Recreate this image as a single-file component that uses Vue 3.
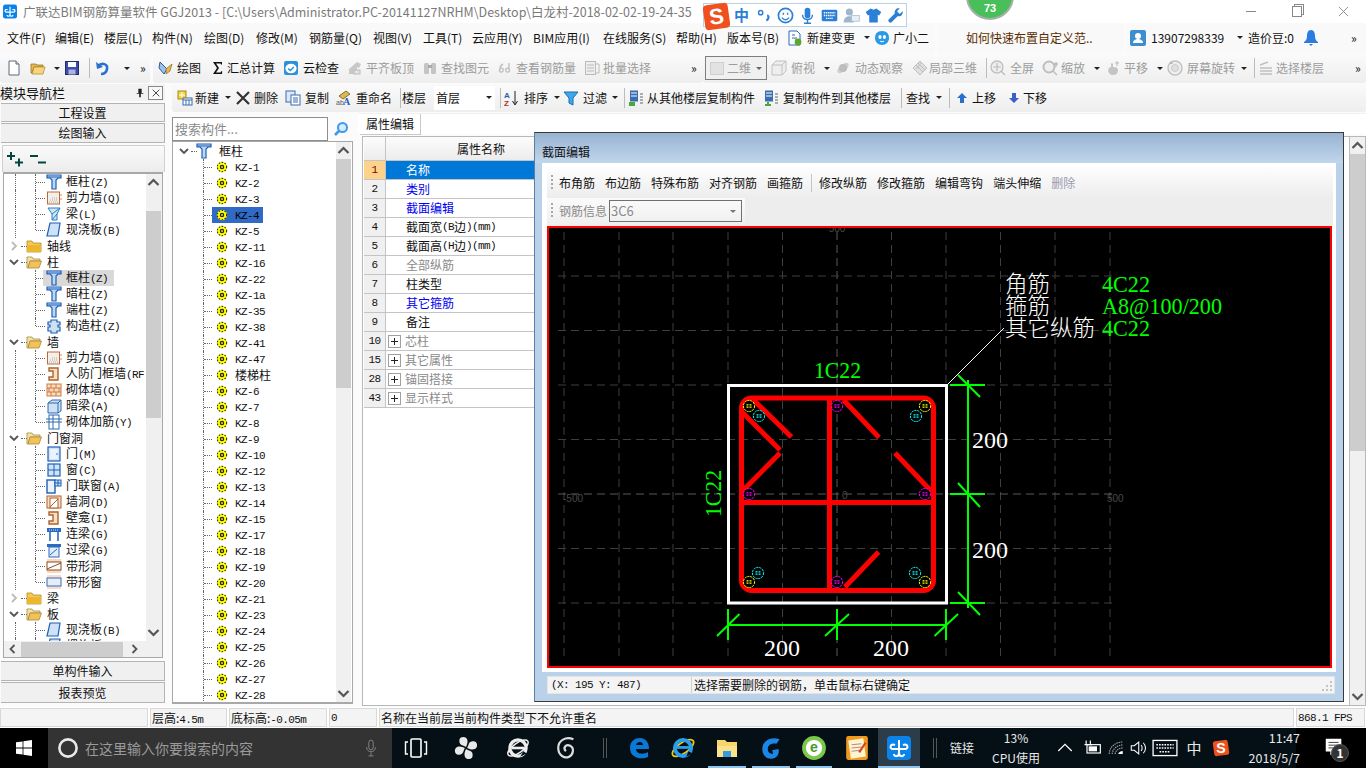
<template>
  <div class="app">
    <!-- title bar -->
    <div class="title">
      <svg class="title-ic" viewBox="0 0 24 24" v-html="taskIcons.gld"></svg>
      <span class="title-text">广联达BIM钢筋算量软件 GGJ2013 - [C:\Users\Administrator.PC-20141127NRHM\Desktop\白龙村-2018-02-02-19-24-35</span>
      <div class="winbtns">
        <span class="wb"><i class="wb-min"></i></span>
        <span class="wb"><i class="wb-max"></i></span>
        <span class="wb wb-x">
          <svg viewBox="0 0 12 12"><path d="M1 1l10 10M11 1L1 11" stroke="#888" fill="none" /></svg>
        </span>
      </div>
    </div>

    <!-- menu + main toolbar -->
    <div v-for="row in topRows" :key="row.id" class="bar" :class="row.id">
      <div
        v-for="(seg, si) in row.segs"
        :key="si"
        class="seg"
        :style="{ width: seg.width + 'px', marginLeft: seg.gap + 'px', paddingLeft: seg.pad + 'px' }"
      >
        <span
          v-for="(it, n) in seg.items"
          :key="n"
          class="it"
          :class="['k-' + it.kind, { dis: it.dis }]"
          :style="{ width: it.w + 'px' }"
        >
          <i v-if="it.kind === 'caret'" class="caret"></i>
          <i v-else-if="it.kind === 'sep'" class="sep"></i>
          <span v-else-if="it.kind === 'twod'" class="combo2d"><i class="sq"></i><span>二维</span><i class="caret"></i></span>
          <template v-else>
            <span v-if="it.i" class="icbox" :style="{ width: it.iw + 'px' }">
              <svg viewBox="0 0 16 16" v-html="icons[it.i]"></svg>
            </span>
            <span class="lbl">{{ it.t }}</span>
          </template>
        </span>
      </div>
    </div>

    <div class="main">
      <!-- module nav -->
      <div class="nav">
        <div class="nav-head">
          <span>模块导航栏</span>
          <svg class="pin" viewBox="0 0 12 12"><path d="M4 1h4v5h2v1H7v4H5V7H2V6h2z" fill="#222" /></svg>
          <span class="nav-x">
            <svg viewBox="0 0 12 12"><path d="M2 2l8 8M10 2l-8 8" stroke="#222" fill="none" /></svg>
          </span>
        </div>
        <div class="nav-btn first">工程设置</div>
        <div class="nav-btn second">绘图输入</div>
        <div class="nav-plus">
          <svg viewBox="0 0 16 15"><path d="M0 4h8M4 0v8M8 10.5h8M12 6.5v8" stroke="#00473f" stroke-width="2" fill="none" /></svg>
          <svg viewBox="0 0 16 15"><path d="M0 4h8M8 10.5h8" stroke="#00473f" stroke-width="2" fill="none" /></svg>
        </div>
        <div class="nav-tree">
          <div class="nav-tree-top">
            <div class="tree">
              <div v-for="(r, n) in navRows" :key="n" class="row" :class="r.root ? 'root' : 'kid'">
                <i v-if="r.chain" class="dots v chain"></i>
                <i v-if="!r.root" class="dots v link" :class="{ last: r.last }"></i>
                <i class="dots h"></i>
                <template v-if="r.root">
                  <svg class="chev" :class="{ closed: !r.open }" viewBox="0 0 12 12">
                    <path :d="r.open ? 'M2 4l4 4 4-4' : 'M4 2l4 4-4 4'" fill="none" stroke-width="1.8" />
                  </svg>
                  <svg class="tree-ic folder" viewBox="0 0 16 16" v-html="icons[r.open ? 'folderOpen' : 'folder']"></svg>
                  <span class="node">{{ r.t }}</span>
                </template>
                <span v-else class="cell" :class="{ grey: r.sel }">
                  <svg class="tree-ic" viewBox="0 0 16 16" v-html="icons[r.i]"></svg>
                  <span class="node">
                    <span v-for="(p, k) in runs(r.t)" :key="k" :class="{ lat: p.lat }">{{ p.t }}</span>
                  </span>
                </span>
              </div>
            </div>
            <div class="sb">
              <svg class="sb-arrow" viewBox="0 0 12 12"><path d="M2 8l4-4 4 4" /></svg>
              <div class="sb-track nav-track"><div class="sb-thumb"></div></div>
              <svg class="sb-arrow" viewBox="0 0 12 12"><path d="M2 4l4 4 4-4" /></svg>
            </div>
          </div>
          <div class="hsb">
            <svg class="hsb-arrow" viewBox="0 0 12 12"><path d="M8 2L4 6l4 4" /></svg>
            <div class="hsb-thumb"></div>
            <svg class="hsb-arrow right" viewBox="0 0 12 12"><path d="M4 2l4 4-4 4" /></svg>
          </div>
        </div>
        <div class="nav-btn low">单构件输入</div>
        <div class="nav-btn low2">报表预览</div>
      </div>

      <div class="work">
        <!-- component toolbar -->
        <div class="bar row3">
          <div
            v-for="(seg, si) in row3.segs"
            :key="si"
            class="seg"
            :style="{ width: seg.width + 'px', marginLeft: seg.gap + 'px', paddingLeft: seg.pad + 'px' }"
          >
            <span
              v-for="(it, n) in seg.items"
              :key="n"
              class="it"
              :class="['k-' + it.kind, { dis: it.dis }]"
              :style="{ width: it.w + 'px' }"
            >
              <i v-if="it.kind === 'caret'" class="caret"></i>
              <i v-else-if="it.kind === 'sep'" class="sep"></i>
              <span v-else-if="it.kind === 'combo'" class="floor">首层<i class="caret"></i></span>
              <template v-else>
                <span v-if="it.i" class="icbox" :style="{ width: it.iw + 'px' }">
                  <svg viewBox="0 0 16 16" v-html="icons[it.i]"></svg>
                </span>
                <span class="lbl">{{ it.t }}</span>
              </template>
            </span>
          </div>
        </div>

        <div class="panes">
          <!-- component list -->
          <div class="list-pane">
            <div class="search">
              <div class="search-box">搜索构件...</div>
              <svg class="search-ic" viewBox="0 0 16 16">
                <circle cx="9.5" cy="6.5" r="4.5" fill="#d6ecff" stroke="#3c9ae8" stroke-width="2" />
                <path d="M6 10l-4 4" stroke="#3c9ae8" stroke-width="2.6" />
              </svg>
            </div>
            <div class="list-box">
              <div class="tree">
                <div class="row list-root">
                  <svg class="chev" viewBox="0 0 12 12"><path d="M2 4l4 4 4-4" fill="none" stroke-width="1.8" /></svg>
                  <i class="dots h"></i>
                  <svg class="tree-ic" viewBox="0 0 16 16" v-html="icons.column"></svg>
                  <span class="node">框柱</span>
                </div>
                <div v-for="name in kzList" :key="name" class="row list-kid">
                  <i class="dots v link"></i>
                  <i class="dots h"></i>
                  <span class="cell" :class="{ blue: name === 'KZ-4' }">
                    <svg class="gear" viewBox="0 0 16 16" v-html="icons.gear"></svg>
                    <span class="node">
                      <span v-for="(p, k) in runs(name)" :key="k" :class="{ lat: p.lat }">{{ p.t }}</span>
                    </span>
                  </span>
                </div>
              </div>
              <div class="sb">
                <svg class="sb-arrow" viewBox="0 0 12 12"><path d="M2 8l4-4 4 4" /></svg>
                <div class="sb-track list-track"><div class="sb-thumb"></div></div>
                <svg class="sb-arrow" viewBox="0 0 12 12"><path d="M2 4l4 4 4-4" /></svg>
              </div>
            </div>
          </div>

          <!-- property editor -->
          <div class="prop-pane">
            <div class="tabs"><span class="tab">属性编辑</span></div>
            <div class="prop-box">
              <div class="prop-table">
                <div class="prow phead">
                  <span class="pidx"></span>
                  <span class="pname">属性名称</span>
                </div>
                <div v-for="(p, n) in props" :key="p.n" class="prow" :class="{ cur: n === 0 }">
                  <span class="pidx">{{ p.n }}</span>
                  <span class="pname left" :class="p.c">
                    <i v-if="p.plus" class="plus"></i>
                    <span v-for="(q, k) in runs(p.t)" :key="k" :class="{ lat: q.lat }">{{ q.t }}</span>
                  </span>
                </div>
              </div>
              <div class="sb prop-sb">
                <svg class="sb-arrow" viewBox="0 0 12 12"><path d="M2 8l4-4 4 4" /></svg>
                <div class="sb-track prop-track"><div class="sb-thumb"></div></div>
                <svg class="sb-arrow" viewBox="0 0 12 12"><path d="M2 4l4 4 4-4" /></svg>
              </div>
            </div>
          </div>
        </div>
      </div>
    </div>

    <!-- status bar -->
    <div class="status">
      <span class="st s0"></span>
      <span class="st s1"><span>层高:</span><span class="lat">4.5m</span></span>
      <span class="st s2"><span>底标高:</span><span class="lat">-0.05m</span></span>
      <span class="st s3 lat">0</span>
      <span class="st s4">名称在当前层当前构件类型下不允许重名</span>
      <span class="st s5 lat">868.1 FPS</span>
    </div>

    <!-- taskbar -->
    <div class="taskbar">
      <div class="start">
        <svg viewBox="0 0 16 16">
          <path d="M0 2.3L6.6 1.4V7.6H0zM7.4 1.3L16 0V7.6H7.4zM0 8.4H6.6V14.6L0 13.7zM7.4 8.4H16V16L7.4 14.7z" fill="#fff" />
        </svg>
      </div>
      <div class="tsearch">
        <svg class="cortana" viewBox="0 0 22 22"><circle cx="11" cy="11" r="8.6" fill="none" stroke="#e8e8e8" stroke-width="2.6" /></svg>
        <span>在这里输入你要搜索的内容</span>
        <svg class="tmic" viewBox="0 0 16 20">
          <rect x="5.5" y="1" width="5" height="11" rx="2.5" fill="none" stroke="#8a8a8a" />
          <path d="M3 9c0 7 10 7 10 0M8 15v4M5 19h6" fill="none" stroke="#8a8a8a" />
        </svg>
      </div>
      <span
        v-for="c in taskCells"
        :key="c.id"
        class="tc"
        :class="[c.cls, { run: c.run }]"
        :style="{ width: c.w + 'px' }"
      >
        <svg v-if="c.i" :style="{ width: c.s + 'px', height: c.s + 'px' }" viewBox="0 0 24 24" v-html="taskIcons[c.i]"></svg>
        <span v-else-if="c.t" class="tc-text">{{ c.t }}</span>
      </span>
      <span class="tc cpu">13%<br />CPU使用</span>
      <span v-for="c in trayCells" :key="c.id" class="tc" :style="{ width: c.w + 'px' }">
        <svg v-if="c.i" :style="{ width: c.s + 'px', height: c.s + 'px' }" viewBox="0 0 24 24" v-html="taskIcons[c.i]"></svg>
        <span v-else class="tc-text big">{{ c.t }}</span>
      </span>
      <span class="clock">11:47<br />2018/5/7</span>
      <span class="notif">
        <svg viewBox="0 0 24 24">
          <path d="M3 3h17v14h-8l-4 4v-4H3z" fill="#fff" />
          <path d="M6 7h11M6 10h11M6 13h8" stroke="#333" />
        </svg>
        <b>1</b>
      </span>
    </div>

    <!-- section editor window -->
    <div class="dlg">
      <div class="dlg-title">截面编辑</div>
      <div class="dlg-body">
        <div class="dlg-tb">
          <i class="grip"></i>
          <span v-for="b in dlgBtns" :key="b" class="dbtn" :class="{ off: b === '删除', sepafter: b === '画箍筋' }">{{ b }}</span>
        </div>
        <div class="dlg-tb2">
          <div class="dlg-tb2-in">
            <i class="grip"></i>
            <span class="dinfo">钢筋信息</span>
            <span class="dcombo">3C6<i class="caret"></i></span>
          </div>
        </div>
        <div class="canvas">
          <svg width="781" height="438" viewBox="549 228 781 438">
            <g stroke-dasharray="8 5" fill="none">
              <path v-for="x in gridX" :key="'x' + x" :d="`M${x} 232V660`" :stroke="x === 837 ? '#5a5a5a' : '#3e3e3e'" />
              <path v-for="y in gridY" :key="'y' + y" :d="`M558 ${y}H1116`" :stroke="y === 494 ? '#5a5a5a' : '#3e3e3e'" />
            </g>
            <g fill="#4a4a4a" font-family="Liberation Sans, sans-serif" font-size="10">
              <text x="837" y="232" text-anchor="middle">500</text>
              <text x="563" y="502">-500</text>
              <text x="1107" y="502">500</text>
              <text x="842" y="499">0</text>
            </g>

            <!-- section outline -->
            <rect x="728.5" y="385.5" width="218" height="217.5" fill="none" stroke="#fff" stroke-width="3" />

            <!-- stirrups -->
            <g fill="none" stroke="#f00" stroke-width="5">
              <rect x="741.5" y="398" width="192" height="192.5" rx="10" />
              <path d="M829.5 398V590M742 502.5H933" />
              <path d="M753.5 400L791.5 437M742 412L780 450M780 453L742 491.5" />
              <path d="M843.5 400L879 437.5M895 453L931.5 491.5M878.5 552L845 587" />
            </g>

            <!-- bars -->
            <g v-for="(b, n) in bars" :key="n" :transform="`translate(${b.x} ${b.y})`">
              <circle r="5.6" fill="#000" :stroke="b.c" stroke-dasharray="2.2 0.8" />
              <path d="M-2.5 -1.2h2M.5 -1.2h2M-2.5 1.2h2M.5 1.2h2" :stroke="b.d" stroke-width="1.2" />
            </g>

            <!-- dimensions -->
            <g fill="none" stroke="#0f0" stroke-width="2">
              <path d="M728 625H946M728 609V640M837 609V640M946 609V640" />
              <path d="M717 636L739.5 614M825 636L849 614M934.5 636L958 614" />
              <path d="M968 380V608M950 385H985M950 494H985M950 603H985" />
              <path d="M958 375L980 397M958 483L980 507M958 592L980 615" />
            </g>
            <path d="M947 385L1004 328" stroke="#fff" />

            <g class="cad-num" fill="#fff">
              <text x="764" y="656" textLength="36" lengthAdjust="spacingAndGlyphs">200</text>
              <text x="873" y="656" textLength="36" lengthAdjust="spacingAndGlyphs">200</text>
              <text x="972" y="448" textLength="36" lengthAdjust="spacingAndGlyphs">200</text>
              <text x="972" y="558" textLength="36" lengthAdjust="spacingAndGlyphs">200</text>
            </g>
            <g class="cad-num" fill="#0f0">
              <text x="814" y="378" textLength="47" lengthAdjust="spacingAndGlyphs">1C22</text>
              <text x="0" y="0" textLength="47" lengthAdjust="spacingAndGlyphs" transform="translate(721 517) rotate(-90)">1C22</text>
              <text x="1102" y="292" textLength="48" lengthAdjust="spacingAndGlyphs">4C22</text>
              <text x="1102" y="314" textLength="120" lengthAdjust="spacingAndGlyphs">A8@100/200</text>
              <text x="1102" y="336" textLength="48" lengthAdjust="spacingAndGlyphs">4C22</text>
            </g>
            <g class="cad-cn" fill="#fff">
              <text x="1005" y="292">角筋</text>
              <text x="1005" y="314">箍筋</text>
              <text x="1005" y="336">其它纵筋</text>
            </g>
          </svg>
        </div>
      </div>
      <div class="dlg-status">
        <span class="ds1 lat">(X: 195 Y: 487)</span>
        <span class="ds2">选择需要删除的钢筋，单击鼠标右键确定</span>
        <svg class="sgrip" viewBox="0 0 12 12">
          <path d="M9 1h2v2H9zM5 5h2v2H5zM9 5h2v2H9zM1 9h2v2H1zM5 9h2v2H5zM9 9h2v2H9z" fill="#c4c4c4" />
        </svg>
      </div>
    </div>

    <!-- floating bits over the title bar -->
    <div class="ime">
      <span class="ime-s">S</span>
      <span class="ime-cn">中</span>
      <svg v-for="n in imeIcons" :key="n" class="ime-ic" viewBox="0 0 24 24" v-html="imeSvg[n]"></svg>
    </div>
    <div class="ball"><span>73</span></div>
  </div>
</template>

<script setup>
// rows are described by the x where each item starts, widths come from the next item
const KINDS = ['caret', 'sep', 'combo', 'twod']

function seg(from, to, list) {
  const items = list.map((a, n) => {
    const next = n + 1 < list.length ? list[n + 1][0] : to
    const [x, tx, i, t, opt] = a
    const kind = KINDS.includes(i) ? i : ''
    return {
      w: next - x,
      iw: tx - x,
      i: kind ? '' : i,
      t,
      kind,
      dis: opt === 'd',
    }
  })
  return { from, to, x0: list[0][0], items }
}

function row(id, segs) {
  let prev = 0
  const out = segs.map((s) => {
    const r = { ...s, width: s.to - s.from, gap: s.from - prev, pad: s.x0 - s.from }
    prev = s.to
    return r
  })
  return { id, segs: out }
}

const menuRow = row('menu', [
  seg(0, 935, [
    [7, 7, '', '文件(F)'], [55, 55, '', '编辑(E)'], [104, 104, '', '楼层(L)'], [152, 152, '', '构件(N)'],
    [204, 204, '', '绘图(D)'], [256, 256, '', '修改(M)'], [309, 309, '', '钢筋量(Q)'], [373, 373, '', '视图(V)'],
    [423, 423, '', '工具(T)'], [472, 472, '', '云应用(Y)'], [533, 533, '', 'BIM应用(I)'], [603, 603, '', '在线服务(S)'],
    [676, 676, '', '帮助(H)'], [727, 727, '', '版本号(B)'], [787, 807, 'change', '新建变更'], [860, 0, 'caret'],
    [874, 893, 'xiao', '广小二'],
  ]),
  seg(937, 1124, [[966, 966, '', '如何快速布置自定义范..']]),
  seg(1126, 1366, [
    [1130, 1151, 'avatar', '13907298339'], [1232, 0, 'caret'], [1248, 1248, '', '造价豆:0'],
    [1303, 1303, 'bell', ''], [1351, 1351, '', '»'],
  ]),
])

const toolRow = row('tools', [
  seg(0, 150, [
    [6, 6, 'doc', ''], [30, 30, 'open', ''], [49, 0, 'caret'], [64, 64, 'save', ''], [84, 0, 'sep'],
    [94, 94, 'undo', ''], [113, 0, 'caret'], [140, 140, '', '»'],
  ]),
  seg(153, 703, [
    [157, 177, 'draw', '绘图'], [211, 227, 'sigma', '汇总计算'], [283, 303, 'cloud', '云检查'],
    [347, 366, 'plate', '平齐板顶', 'd'], [422, 441, 'binoc', '查找图元', 'd'], [497, 516, 'rebar', '查看钢筋量', 'd'],
    [584, 603, 'batch', '批量选择', 'd'], [691, 691, '', '»'],
  ]),
  seg(703, 1366, [
    [705, 0, 'twod'], [771, 791, 'box3d', '俯视', 'd'], [819, 0, 'caret'], [835, 855, 'orbit', '动态观察', 'd'],
    [912, 929, 'local3d', '局部三维', 'd'], [983, 0, 'sep'], [990, 1010, 'zoomall', '全屏', 'd'],
    [1042, 1061, 'zoom', '缩放', 'd'], [1089, 0, 'caret'], [1105, 1124, 'pan', '平移', 'd'], [1152, 0, 'caret'],
    [1167, 1187, 'rotate', '屏幕旋转', 'd'], [1237, 0, 'caret'], [1250, 0, 'sep'],
    [1258, 1276, 'floors', '选择楼层', 'd'], [1355, 1355, '', '»'],
  ]),
])

const topRows = [menuRow, toolRow]

const row3 = row('row3', [
  seg(0, 1194, [
    [5, 23, 'add', '新建'], [48, 0, 'caret'], [63, 82, 'del', '删除'], [113, 133, 'copy', '复制'],
    [164, 184, 'rename', '重命名'], [226, 0, 'sep'], [230, 230, '', '楼层'], [260, 0, 'combo'], [324, 0, 'sep'],
    [332, 352, 'sort', '排序'], [379, 0, 'caret'], [391, 411, 'filter', '过滤'], [437, 0, 'caret'], [448, 0, 'sep'],
    [456, 475, 'from', '从其他楼层复制构件'], [591, 611, 'to', '复制构件到其他楼层'], [725, 0, 'sep'],
    [734, 734, '', '查找'], [760, 0, 'caret'], [773, 0, 'sep'], [782, 800, 'up', '上移'], [834, 851, 'down', '下移'],
  ]),
])

const nav = (i, t, chain = true, last = false, sel = false) => ({ i, t, chain, last, sel })
const root = (t, open) => ({ root: true, t, open })

const navRows = [
  nav('column', '框柱(Z)'), nav('wall', '剪力墙(Q)'), nav('beam', '梁(L)'), nav('slab', '现浇板(B)', true, true),
  root('轴线', false), root('柱', true),
  nav('column', '框柱(Z)', false, false, true), nav('column', '暗柱(Z)', false), nav('column', '端柱(Z)', false),
  nav('puzzle', '构造柱(Z)', false, true),
  root('墙', true),
  nav('wall', '剪力墙(Q)'), nav('rf', '人防门框墙(RF'), nav('brick', '砌体墙(Q)'), nav('darkbeam', '暗梁(A)'),
  nav('rebarwall', '砌体加筋(Y)', true, true),
  root('门窗洞', true),
  nav('door', '门(M)'), nav('window', '窗(C)'), nav('doorwin', '门联窗(A)'), nav('hole', '墙洞(D)'), nav('rf', '壁龛(I)'),
  nav('linkbeam', '连梁(G)'), nav('lintel', '过梁(G)'), nav('striphole', '带形洞'), nav('stripwin', '带形窗', true, true),
  root('梁', false), root('板', true),
  nav('slab', '现浇板(B)'), nav('slab', '螺旋板(B)'),
]

const kzList = [
  'KZ-1', 'KZ-2', 'KZ-3', 'KZ-4', 'KZ-5', 'KZ-11', 'KZ-16', 'KZ-22', 'KZ-1a', 'KZ-35', 'KZ-38', 'KZ-41', 'KZ-47', '楼梯柱',
  'KZ-6', 'KZ-7', 'KZ-8', 'KZ-9', 'KZ-10', 'KZ-12', 'KZ-13', 'KZ-14', 'KZ-15', 'KZ-17', 'KZ-18', 'KZ-19', 'KZ-20', 'KZ-21',
  'KZ-23', 'KZ-24', 'KZ-25', 'KZ-26', 'KZ-27', 'KZ-28',
]

const props = [
  { n: 1, t: '名称', c: 'sel' }, { n: 2, t: '类别', c: 'link' }, { n: 3, t: '截面编辑', c: 'link' },
  { n: 4, t: '截面宽(B边)(mm)' }, { n: 5, t: '截面高(H边)(mm)' }, { n: 6, t: '全部纵筋', c: 'mute' },
  { n: 7, t: '柱类型' }, { n: 8, t: '其它箍筋', c: 'link' }, { n: 9, t: '备注' },
  { n: 10, t: '芯柱', c: 'mute', plus: true }, { n: 15, t: '其它属性', c: 'mute', plus: true },
  { n: 28, t: '锚固搭接', c: 'mute', plus: true }, { n: 43, t: '显示样式', c: 'mute', plus: true },
]

// latin runs go in the narrow mono face, like the 6px half-width latin of the original
function runs(text) {
  return text.split(/([\x00-\x7f]+)/).filter(Boolean).map((t) => ({ t, lat: /^[\x00-\x7f]/.test(t) }))
}

const dlgBtns = ['布角筋', '布边筋', '特殊布筋', '对齐钢筋', '画箍筋', '修改纵筋', '修改箍筋', '编辑弯钩', '端头伸缩', '删除']

const gridX = [564, 619, 673, 728, 782.5, 837, 891.5, 946, 1000.5, 1055, 1110]
const gridY = [276, 330.5, 385, 439.5, 494, 548.5, 603]

const bars = [
  { x: 749, y: 406, c: '#ff0', d: '#ff0' }, { x: 925, y: 406, c: '#ff0', d: '#ff0' },
  { x: 749, y: 582, c: '#ff0', d: '#ff0' }, { x: 925, y: 582, c: '#ff0', d: '#ff0' },
  { x: 837, y: 406, c: '#f0f', d: '#f0f' }, { x: 749, y: 494, c: '#f0f', d: '#f0f' },
  { x: 925, y: 494, c: '#f0f', d: '#f0f' }, { x: 837, y: 582, c: '#f0f', d: '#f0f' },
  { x: 759, y: 416, c: '#0ff', d: '#0ff' }, { x: 916, y: 416, c: '#0ff', d: '#0ff' },
  { x: 758, y: 573, c: '#0ff', d: '#0ff' }, { x: 915, y: 573, c: '#0ff', d: '#0ff' },
]

const imeIcons = ['comma', 'smile', 'mic', 'kb', 'user', 'shirt', 'wrench']
const imeSvg = {
  comma: '<circle cx="8" cy="8" r="3" fill="none" stroke="#2a7fd6" stroke-width="2"/><path d="M17 12c3 0 3 5-1 7" fill="none" stroke="#2a7fd6" stroke-width="3"/>',
  smile: '<circle cx="12" cy="12" r="10" fill="none" stroke="#2a7fd6" stroke-width="2.4"/><path d="M9 8v3M15 8v3M7 15c3 4 7 4 10 0" fill="none" stroke="#2a7fd6" stroke-width="2"/>',
  mic: '<rect x="8" y="1" width="8" height="15" rx="4" fill="#2a7fd6"/><path d="M5 11c0 9 14 9 14 0M12 18v4M7 23h10" fill="none" stroke="#2a7fd6" stroke-width="2"/>',
  kb: '<rect x="1" y="4" width="22" height="16" rx="2" fill="#2a7fd6"/><path d="M4 8h16M4 12h16M7 16h10" stroke="#fff" stroke-width="2" stroke-dasharray="2 1"/>',
  user: '<circle cx="9" cy="7" r="5" fill="#9fb6cc"/><path d="M1 22c0-7 4-9 8-9s5 1 6 2v7z" fill="#9fb6cc"/><rect x="12" y="12" width="11" height="8" fill="#e8eff6" stroke="#9fb6cc"/>',
  shirt: '<path d="M8 2l4 2 4-2 7 5-3 5-2-1v11H6V11l-2 1-3-5z" fill="#2a7fd6"/>',
  wrench: '<path d="M22 6l-4 4-4-4 4-4c-4-1-8 2-7 7L2 18c-1 2 2 5 4 4l9-9c5 1 8-3 7-7z" fill="#2a7fd6"/>',
}

const icons = {
  change: '<path d="M2 1h8l3 3v11H2z" fill="#fff" stroke="#2a6bc0"/><path d="M5 8h5M5 5h3" stroke="#2a6bc0"/><circle cx="11" cy="12" r="3.4" fill="#5aa82a"/>',
  xiao: '<path d="M8 1c5 0 7 3 7 7s-3 7-7 7-7-3-7-7 2-7 7-7z" fill="#2a9ae8"/><ellipse cx="6" cy="7" rx="1.6" ry="2" fill="#fff"/><ellipse cx="10.4" cy="7" rx="1.6" ry="2" fill="#fff"/><path d="M6 11c1 1 3 1 4 0" stroke="#fff" fill="none"/>',
  avatar: '<rect x="0" y="0" width="16" height="16" rx="2" fill="#3d8ed0"/><circle cx="8" cy="6" r="3" fill="#fff"/><path d="M3 13c0-3 3-4 5-4s5 1 5 4z" fill="#fff"/>',
  bell: '<path d="M8 0c3 0 4 3 4 6 0 3 1 5 3 6v1H1v-1c2-1 3-3 3-6 0-3 1-6 4-6z" fill="#2b7be0"/><path d="M6 14h4l-2 2z" fill="#2b7be0"/>',
  doc: '<path d="M3 1h7l3 3v11H3z" fill="#fff" stroke="#5b6b7b"/><path d="M10 1v3h3" fill="#dde" stroke="#5b6b7b"/>',
  open: '<path d="M1 4h5l1 1h6v2H4L2 13H1z" fill="#e8b94a" stroke="#8a6a20" stroke-width=".7"/><path d="M4 7h11l-2 7H2z" fill="#f7d67a" stroke="#a8842c" stroke-width=".7"/>',
  save: '<rect x="1.5" y="1.5" width="13" height="13" fill="#3c4fa8" stroke="#222a6a"/><rect x="4" y="2" width="8" height="5" fill="#fff"/><rect x="4.5" y="9.5" width="7" height="5" fill="#aab4e0"/>',
  undo: '<path d="M4 6c4-4 10-2 9 3-.5 3-3 5-6 5" fill="none" stroke="#2b6fd0" stroke-width="2.6"/><path d="M2 2l1 7 6-2z" fill="#2b6fd0"/>',
  draw: '<path d="M3 2l7 7-3 5-5-6z" fill="#9cc2ec" stroke="#2c5a9e"/><path d="M9 9l6-5-2 7-4 3z" fill="#e4b84c" stroke="#8a6a20" stroke-width=".7"/>',
  sigma: '<path d="M2 2h9v2.5H10L9.6 3.5H5L8 8l-3 4.5h4.6l.6-1.2h1L11 14H2l4-6z" fill="#111"/>',
  cloud: '<rect x="1" y="1" width="14" height="14" rx="2" fill="#2a8fdc"/><ellipse cx="8" cy="8.5" rx="5.6" ry="4.8" fill="#fff"/><path d="M5.2 8.5l2.2 2 3.4-3.6" stroke="#2a8fdc" fill="none" stroke-width="1.4"/>',
  plate: '<path d="M2 9l8-7 4 2-2 4-2-1v7H2z" fill="#c8c8c8"/><rect x="7" y="10" width="6" height="4" fill="#e2e2e2" stroke="#bbb"/>',
  binoc: '<rect x="2" y="3" width="5" height="11" rx="1.5" fill="#c4c4c4"/><rect x="9" y="3" width="5" height="11" rx="1.5" fill="#c4c4c4"/><rect x="6" y="5" width="4" height="3" fill="#aaa"/>',
  rebar: '<path d="M3 9c-2 3 2 4 3 2S5 7 3 9zM6 4C4 5 3 7 3 9" fill="none" stroke="#c0c0c0" stroke-width="1.4"/><path d="M12 9c2 3-2 4-3 2s1-4 3-2zM12 9V3" fill="none" stroke="#c0c0c0" stroke-width="1.4"/>',
  batch: '<rect x="1.5" y="1.5" width="10" height="13" fill="#eee" stroke="#bbb"/><path d="M3 5h7M3 8h7M3 11h7M12 4h3v9h-3" fill="none" stroke="#bbb"/>',
  box3d: '<path d="M1 5l4-4h10v10l-4 4H1z" fill="#eee" stroke="#c0c0c0"/><path d="M1 5h10v10M11 5l4-4" fill="none" stroke="#c0c0c0"/>',
  orbit: '<ellipse cx="8" cy="8" rx="7" ry="3.4" transform="rotate(-40 8 8)" fill="#d0d0d0"/><circle cx="8" cy="8" r="4" fill="#bdbdbd"/>',
  local3d: '<path d="M8 1l7 7-7 7-7-7z" fill="#e0e0e0" stroke="#c0c0c0"/><path d="M4 5l7 7M6 3l7 7M9 3L4 9" stroke="#bbb" fill="none"/>',
  zoomall: '<circle cx="7" cy="7" r="6" fill="#eee" stroke="#c0c0c0" stroke-width="1.4"/><path d="M7 3v8M3 7h8M11 11l4 4" stroke="#bbb" stroke-width="1.2"/>',
  zoom: '<circle cx="7" cy="7" r="5.5" fill="#f0f0f0" stroke="#bebebe" stroke-width="2"/><path d="M11 11l4 4M14 2v5M12 4h4" stroke="#bbb" stroke-width="1.4"/>',
  pan: '<path d="M4 8c0-1 2-1 2 0V4c0-1 2-1 2 0v3h1c2 0 4 1 4 3 0 3-2 5-5 5s-4-2-5-4z" fill="#c4c4c4"/><path d="M12 1v5M10 3h4" stroke="#bbb"/>',
  rotate: '<circle cx="8" cy="8" r="7" fill="#eee" stroke="#c0c0c0" stroke-width="1.4"/><circle cx="8" cy="8" r="3.4" fill="#e0e0e0" stroke="#c8c8c8"/><path d="M2 4l2-3 2 3" fill="#bbb"/>',
  floors: '<path d="M2 5l8-3M2 8h12M2 11h12M2 14h12" stroke="#c0c0c0" stroke-width="1.4" fill="none"/>',
  add: '<rect x="1" y="1" width="8" height="8" fill="#f5d33c" stroke="#a88a10"/><path d="M5 2v6M2 5h6" stroke="#fff"/><rect x="6" y="8" width="9" height="7" fill="#fff" stroke="#3a6cb0"/><path d="M6 10h9M9 10v5M12 10v5" stroke="#3a6cb0"/>',
  del: '<path d="M2 2l12 12M14 2L2 14" stroke="#333" stroke-width="2.2"/>',
  copy: '<rect x="1" y="1" width="9" height="11" fill="#dbe8f8" stroke="#3a6cb0"/><rect x="6" y="5" width="9" height="10" fill="#fff" stroke="#3a6cb0"/><path d="M8 8h5M8 10h5M8 12h5" stroke="#3a6cb0"/>',
  rename: '<path d="M3 6l7-5 4 3-7 5z" fill="#d8b858" stroke="#8a7020"/><text x="0" y="15" font-size="7" font-family="Liberation Sans" fill="#555">ab</text><text x="7" y="15" font-size="10" font-weight="700" font-family="Liberation Serif" fill="#1f5fb4">A</text>',
  sort: '<text x="0" y="7.5" font-size="8" font-weight="700" font-family="Liberation Sans" fill="#2a5fb0">A</text><text x="0" y="15.5" font-size="8" font-weight="700" font-family="Liberation Sans" fill="#b03020">Z</text><path d="M11 1v13M8.5 11l2.5 4 2.5-4" fill="none" stroke="#222"/>',
  filter: '<path d="M1 2h14L10 8v7l-4-2V8z" fill="#3ea8e8" stroke="#1c6cb0"/>',
  from: '<rect x="2" y="0.5" width="8" height="11" fill="#3a6cb0"/><path d="M3 3h6M3 6h6" stroke="#fff"/><path d="M12 4h3M12 7h3M12 10h3M12 13h3" stroke="#666"/><rect x="1" y="12" width="6" height="4" fill="#4aa83a"/>',
  to: '<rect x="2" y="0.5" width="8" height="11" fill="#3a6cb0"/><path d="M3 3h6M3 6h6" stroke="#fff"/><path d="M12 4h3M12 7h3M12 10h3M12 13h3" stroke="#666"/><path d="M4 12h2v2h2v2H2v-2h2z" fill="#4aa83a"/>',
  up: '<path d="M8 3l5 5h-3v5H6V8H3z" fill="#2a6fd0"/>',
  down: '<path d="M8 13l5-5h-3V3H6v5H3z" fill="#3a5fc8"/>',
  column: '<path d="M1 1h14v3h-3l-2 2v9H6V6L4 4H1z" fill="#bcd9f7" stroke="#1f5fb4" stroke-width="1.2"/><path d="M1 3h14" stroke="#1f5fb4"/>',
  wall: '<rect x="1.5" y="2" width="12" height="12" fill="#f4efe8" stroke="#c0683a"/><path d="M3 12h9M4 10h8M6 8h6" stroke="#aaa" stroke-dasharray="1 1"/><path d="M15 4v8" stroke="#e08a40" stroke-dasharray="2 2"/>',
  beam: '<path d="M2 2h12l-3 6v6H6V8z" fill="#cfe7f8" stroke="#2a7fc0"/><path d="M6 8l8-6M6 14l5-6" stroke="#2a7fc0" fill="none"/>',
  slab: '<path d="M4 1h10l-2 13H1z" fill="#cde1f7" stroke="#1f5fb4" stroke-width="1.2"/>',
  puzzle: '<path d="M5 2h6v2h3v3h-2v2h2v4h-3v2H5v-2H2V9h2V7H2V4h3z" fill="#cfe0f4" stroke="#1f5fb4" stroke-width="1.2"/>',
  rf: '<path d="M3 2h9v12H3v-3h4V5H3z" fill="#f7e2c8" stroke="#b0602a" stroke-width="1.4"/>',
  brick: '<rect x="1" y="2" width="14" height="12" fill="#f8ddc4" stroke="#d07a40"/><path d="M1 6h14M1 10h14M5 2v4M10 2v4M3 6v4M8 6v4M13 6v4M5 10v4M10 10v4" stroke="#d07a40" fill="none"/>',
  darkbeam: '<path d="M2 5l4-3h9v11l-3 2H2z" fill="#cfe0f4" stroke="#2a6bb0"/><path d="M2 5h10v10M12 5l3-3" fill="none" stroke="#2a6bb0"/>',
  rebarwall: '<rect x="3" y="1" width="10" height="14" fill="#fff" stroke="#2a6bb0"/><path d="M0 5h16M0 8h16M7 1v14" stroke="#2a6bb0" fill="none"/>',
  door: '<rect x="2" y="1" width="12" height="14" fill="#cfe3f8" stroke="#1f5fb4" stroke-width="1.2"/><rect x="4" y="3" width="8" height="10" fill="#eaf3fc"/><circle cx="11" cy="8" r=".8" fill="#1f5fb4"/>',
  window: '<rect x="2" y="2" width="12" height="12" fill="#cfe3f8" stroke="#1f5fb4" stroke-width="1.2"/><path d="M8 2v12M2 8h12" stroke="#1f5fb4"/>',
  doorwin: '<rect x="1" y="2" width="8" height="13" fill="#eaf3fc" stroke="#1f5fb4" stroke-width="1.4"/><rect x="9" y="2" width="6" height="6" fill="#cfe3f8" stroke="#1f5fb4"/><path d="M12 2v6M9 5h6" stroke="#1f5fb4"/>',
  hole: '<rect x="1" y="2" width="14" height="12" fill="#f8ddc4" stroke="#b0602a"/><rect x="4" y="4" width="8" height="10" fill="#fff" stroke="#b0602a"/><path d="M4 13l8-8" stroke="#b0602a"/>',
  linkbeam: '<rect x="1" y="2" width="14" height="4" fill="#2a6bc0"/><path d="M4 6v9M12 6v9" stroke="#2a6bc0" stroke-width="1.6"/><path d="M3 4h10" stroke="#cfe3f8" stroke-dasharray="1 1"/>',
  lintel: '<rect x="1" y="2" width="14" height="3" fill="#2a6bc0"/><rect x="3" y="5" width="10" height="10" fill="#e0ecfa" stroke="#2a6bc0"/><path d="M4 13l7-6" stroke="#2a6bc0"/>',
  striphole: '<rect x="1" y="1" width="14" height="14" fill="#f6d9c0"/><rect x="1" y="4" width="14" height="8" fill="#fff" stroke="#8a4a20"/><path d="M1 11l14-6" stroke="#8a4a20"/>',
  stripwin: '<rect x="1" y="1" width="14" height="14" fill="#f8dcd4"/><rect x="1" y="4" width="14" height="8" fill="#e4eefa" stroke="#3a6cb0"/>',
  folder: '<path d="M1 3h5l1 2h8v9H1z" fill="#f6c94a" stroke="#a98a3a" stroke-width=".8"/><path d="M1 7h14v7H1z" fill="#eeb52e"/>',
  folderOpen: '<path d="M1 3h5l1 2h7v2H4l-2 7H1z" fill="#f3e1ac" stroke="#a98a3a" stroke-width=".8"/><path d="M4 7h11.5L13 14H2z" fill="#f3c257" stroke="#a98a3a" stroke-width=".8"/>',
  gear: '<circle cx="8" cy="8" r="7" fill="#ff0"/><circle cx="8" cy="8" r="6.2" fill="none" stroke="#222" stroke-dasharray="2 2" stroke-width="1.4"/><circle cx="8" cy="8" r="3" fill="#222"/><circle cx="8" cy="8" r="1.2" fill="#ff0"/>',
}

const taskIcons = {
  taskview: '<rect x="7" y="3" width="10" height="18" rx="1" fill="none" stroke="#fff" stroke-width="1.6"/><path d="M4 6H1.5v12H4M20 6h2.5v12H20" fill="none" stroke="#fff" stroke-width="1.4"/>',
  pinwheel: '<path d="M12 11C9 9 5 10 6 4c1-3 6-3 7 0 1 2 0 5-1 7zM13 12c2-3 1-7 7-6 3 1 3 6 0 7-2 1-5 0-7-1zM12 13c3 2 7 1 6 7-1 3-6 3-7 0-1-2 0-5 1-7zM11 12c-2 3-1 7-7 6-3-1-3-6 0-7 2-1 5 0 7 1z" fill="#e8e8e8"/>',
  ieWhite: '<ellipse cx="12" cy="12" rx="11" ry="4.5" transform="rotate(-35 12 12)" fill="none" stroke="#eee" stroke-width="1.4"/><circle cx="12" cy="12" r="7.5" fill="none" stroke="#eee" stroke-width="3"/><path d="M6 12h12" stroke="#eee" stroke-width="2.4"/><path d="M17 15l3 2-6 3z" fill="#051016"/>',
  swirl: '<path d="M17 4C10 1 3 5 3 12s6 10 10 8 5-8 1-10-7 2-4 5" fill="none" stroke="#ddd" stroke-width="2"/>',
  edge: '<path d="M3 12C3 5 8 2 13 2c6 0 9 5 9 11H9c0 5 7 6 12 3v5c-7 3-18 1-18-9zm6-3h7c0-4-6-4-7 0z" fill="#0a78d7"/>',
  ie: '<ellipse cx="12" cy="12" rx="11.5" ry="4.8" transform="rotate(-35 12 12)" fill="none" stroke="#f5c518" stroke-width="1.6"/><circle cx="12" cy="12" r="7.5" fill="none" stroke="#2a9fe8" stroke-width="3.6"/><path d="M5 11.5h14" stroke="#2a9fe8" stroke-width="2.6"/><path d="M17 15l4 2-6 3z" fill="#051016"/>',
  folder: '<path d="M2 4h8l2 2h10v15H2z" fill="#f6d66a"/><path d="M2 10h20v11H2z" fill="#fbe38c"/><rect x="8" y="15" width="8" height="6" fill="#3a9ae0"/>',
  gblue: '<path d="M20 4c-8-3-16 1-16 9 0 6 4 9 8 9 5 0 8-4 7-9l-6 1 1 3c-3 1-5-1-5-4 0-4 4-6 8-5z" fill="#1a86e8"/>',
  ball: '<circle cx="12" cy="12" r="11" fill="#7ac74a"/><circle cx="12" cy="12" r="7.5" fill="#fff"/><text x="12" y="16" text-anchor="middle" font-size="13" font-weight="700" font-family="Liberation Sans" fill="#4a9a2a">e</text>',
  notes: '<rect x="2" y="1" width="20" height="22" rx="2" fill="#f39a1e"/><rect x="5" y="4" width="14" height="17" fill="#fff4d0" transform="rotate(-8 12 12)"/><path d="M7 9l9-1M7 12l9-1M7 15l8-1" stroke="#b88" /><path d="M14 16l6-9" stroke="#d04a20" stroke-width="2"/>',
  gld: '<rect x="0" y="0" width="24" height="24" rx="4" fill="#0b84ea"/><path d="M12 4v13c0 4-5 4-5 1M12 17c0 4 5 4 5 1M8 9C3 7 2 13 6 13H18C22 13 21 7 16 9" fill="none" stroke="#fff" stroke-width="2"/>',
  up: '<path d="M3 16l9-9 9 9" fill="none" stroke="#fff" stroke-width="1.6"/>',
  battery: '<rect x="6" y="8" width="16" height="10" fill="none" stroke="#fff" stroke-width="1.4"/><rect x="8" y="10" width="10" height="6" fill="#fff"/><path d="M5 3v5M10 3v5M3 8h9" stroke="#fff" stroke-width="1.4"/>',
  wifi: '<path d="M3 20c0-9 8-16 18-16M7 20c0-6 6-12 14-12M11 20c0-4 4-8 10-8" fill="none" stroke="#9a9a9a" stroke-width="1.6" stroke-dasharray="2 1"/><path d="M15 20c0-2 3-4 6-4v4z" fill="#fff"/>',
  vol: '<path d="M3 9h4l6-5v16l-6-5H3z" fill="none" stroke="#fff" stroke-width="1.4"/><path d="M16 8c2 2 2 6 0 8M19 5c4 4 4 10 0 14" fill="none" stroke="#fff" stroke-width="1.4"/>',
  kb: '<rect x="1" y="5" width="22" height="14" fill="none" stroke="#fff" stroke-width="1.2"/><path d="M4 9h16M4 12h16M7 15.5h10" stroke="#fff" stroke-width="1.4" stroke-dasharray="1.5 1"/>',
  sogou: '<rect x="3" y="3" width="18" height="18" rx="3" fill="#f0501e" transform="rotate(-8 12 12)"/><text x="12" y="18" text-anchor="middle" font-size="17" font-weight="700" font-family="Liberation Sans" fill="#fff">S</text>',
}

const taskCells = [
  { id: 'tv', w: 48, i: 'taskview', s: 24 },
  { id: 'pw', w: 52, i: 'pinwheel', s: 26 },
  { id: 'iew', w: 52, i: 'ieWhite', s: 26 },
  { id: 'sw', w: 48, i: 'swirl', s: 26 },
  { id: 'sp1', w: 25, cls: 'tsep' },
  { id: 'ed', w: 44, i: 'edge', s: 24 },
  { id: 'ie', w: 44, i: 'ie', s: 26 },
  { id: 'fd', w: 44, i: 'folder', s: 24, run: true },
  { id: 'gb', w: 44, i: 'gblue', s: 26, run: true },
  { id: 'bl', w: 42, i: 'ball', s: 26, run: true },
  { id: 'nt', w: 43, i: 'notes', s: 26 },
  { id: 'gl', w: 42, i: 'gld', s: 24, cls: 'active', run: true },
  { id: 'sp2', w: 30, cls: 'tsep' },
  { id: 'lk', w: 24, t: '链接' },
]

const trayCells = [
  { id: 'up', w: 30, i: 'up', s: 18 },
  { id: 'bt', w: 24, i: 'battery', s: 20 },
  { id: 'wf', w: 24, i: 'wifi', s: 18 },
  { id: 'vl', w: 20, i: 'vol', s: 18 },
  { id: 'kb', w: 34, i: 'kb', s: 26 },
  { id: 'zh', w: 24, t: '中' },
  { id: 'sg', w: 30, i: 'sogou', s: 20 },
]
</script>

<style scoped>
.app {
  position: relative;
  width: 1366px;
  height: 768px;
  overflow: hidden;
  display: flex;
  flex-direction: column;
  background: #fbfbfb;
  color: #111;
  font-family: "Noto Sans CJK SC", "Noto Sans", sans-serif;
  font-size: 12px;
  line-height: 16px;
}

.lat {
  font-family: "Liberation Mono", "Noto Sans CJK SC", monospace;
  font-size: 11px;
  letter-spacing: -0.6px;
}

/* title bar */
.title {
  height: 23px;
  flex: none;
  display: flex;
  align-items: center;
  background: #fff;
  color: #7a7a7a;
  font-size: 12.5px;
}
.title-ic {
  width: 14px;
  height: 15px;
  margin-left: 3px;
  margin-right: 6px;
  flex: none;
}
.title-text {
  white-space: nowrap;
  flex: none;
}
.winbtns {
  margin-left: auto;
  display: flex;
}
.wb {
  width: 46px;
  height: 23px;
  display: flex;
  align-items: center;
  justify-content: center;
}
.wb-min {
  width: 10px;
  border-top: 1px solid #888;
}
.wb-max {
  width: 8px;
  height: 9px;
  border: 1px solid #888;
  box-shadow: 2px -2px 0 -1px #fff, 2px -2px 0 0 #888;
}
.wb-x svg {
  width: 11px;
  height: 11px;
}

/* menu and tool rows */
.bar {
  display: flex;
  flex: none;
}
.bar.menu {
  height: 31px;
  margin-bottom: 1px;
}
.bar.tools {
  height: 28px;
}
.seg {
  display: flex;
  align-items: center;
  flex: none;
  box-sizing: border-box;
  white-space: nowrap;
}
.menu .seg {
  background: #f9f9f9;
  border-radius: 2px;
  padding-bottom: 2px;
}
.tools .seg {
  background: linear-gradient(#fafafa, #eeeeee);
  border-radius: 3px;
  padding-bottom: 2px;
}
.row3 .seg {
  background: linear-gradient(#fafafa, #eeeeee);
  border-radius: 3px;
  padding-bottom: 1px;
}
.it {
  flex: none;
  display: flex;
  align-items: center;
  height: 100%;
  box-sizing: border-box;
}
.k-caret,
.k-sep {
  justify-content: center;
}
.icbox {
  flex: none;
  display: flex;
  align-items: center;
}
.icbox svg {
  width: 16px;
  height: 16px;
  flex: none;
}
.dis {
  color: #9c9c9c;
}
.menu .seg:nth-child(2) .lbl {
  color: #5a2d00;
}
.caret {
  display: block;
  width: 0;
  height: 0;
  flex: none;
  border: 3px solid transparent;
  border-top: 3px solid #222;
  border-bottom: none;
}
.sep {
  display: block;
  height: 20px;
  border-left: 1px solid #bcbcbc;
}

/* 2D combo in the view toolbar */
.combo2d {
  width: 62px;
  height: 24px;
  box-sizing: border-box;
  border: 1px solid #7e7e7e;
  background: #f0f0f0;
  color: #9c9c9c;
  display: flex;
  align-items: center;
  padding: 0 4px;
}
.combo2d .sq {
  width: 14px;
  height: 13px;
  box-sizing: border-box;
  background: #e2e2e2;
  border: 1px solid #cfcfcf;
  margin-right: 3px;
  flex: none;
}
.combo2d .caret {
  margin-left: auto;
  border-top-color: #666;
}

.main {
  display: flex;
  height: 624px;
  flex: none;
}

/* module nav */
.nav {
  width: 165px;
  margin-right: 7px;
  flex: none;
  display: flex;
  flex-direction: column;
}
.nav-head {
  height: 17px;
  margin-top: 1px;
  display: flex;
  align-items: center;
  font-size: 13px;
  background: #f2f2f2;
  flex: none;
}
.pin {
  width: 10px;
  height: 10px;
  margin-left: auto;
  margin-right: 3px;
}
.nav-x {
  width: 15px;
  height: 14px;
  border: 1px solid #888;
  background: #f8f8f8;
  display: flex;
  align-items: center;
  justify-content: center;
  margin-right: 2px;
  box-sizing: border-box;
}
.nav-x svg {
  width: 10px;
  height: 10px;
}
.nav-btn {
  box-sizing: border-box;
  margin-left: 1px;
  border: 1px solid #b4b4b4;
  border-left-width: 0;
  background: #f0f0f0;
  text-align: center;
  line-height: 18px;
  font-size: 12px;
  flex: none;
}
.nav-btn.first {
  height: 19px;
  margin-top: 2px;
}
.nav-btn.second {
  height: 20px;
  margin-top: 1px;
}
.nav-btn.low {
  height: 20px;
  margin-top: 3px;
}
.nav-btn.low2 {
  height: 21px;
  margin-top: 1px;
  line-height: 19px;
}
.nav-plus {
  height: 27px;
  box-sizing: border-box;
  margin: 2px 0 0 2px;
  background: linear-gradient(#fafafa, #ececec);
  border: 1px solid #d0d0d0;
  border-bottom: none;
  display: flex;
  align-items: center;
  padding-left: 4px;
  gap: 7px;
  flex: none;
}
.nav-plus svg {
  width: 16px;
  height: 15px;
}
.nav-tree {
  height: 486px;
  flex: none;
  margin-left: 3px;
  margin-right: 2px;
  box-sizing: border-box;
  border: 1px solid #a8a8a8;
  border-top-width: 2px;
  background: #f0f0f0;
  display: flex;
  flex-direction: column;
}
.nav-tree-top {
  display: flex;
  height: 467px;
  flex: none;
}
.tree {
  flex: 1;
  min-width: 0;
  background: #fff;
  overflow: hidden;
}
.row {
  position: relative;
  height: 16px;
  display: flex;
  align-items: center;
  white-space: nowrap;
}
.dots {
  position: absolute;
  display: block;
}
.dots.v {
  top: 0;
  bottom: 0;
  border-left: 1px dotted #666;
}
.dots.h {
  top: 8px;
  border-top: 1px dotted #666;
}
.chain {
  left: 11px;
}
.link {
  left: 31px;
}
.link.last {
  bottom: 8px;
}
.root .dots.h {
  left: 17px;
  width: 6px;
}
.kid .dots.h {
  left: 32px;
  width: 9px;
}
.root {
  padding-left: 4px;
}
.kid {
  padding-left: 39px;
}
.chev {
  width: 12px;
  height: 12px;
  flex: none;
  stroke: #555;
  position: relative;
  z-index: 1;
}
.chev.closed {
  stroke: #bbb;
}
.root .folder {
  margin-left: 6px;
  margin-right: 5px;
}
.tree-ic {
  width: 16px;
  height: 16px;
  flex: none;
  position: relative;
  z-index: 1;
}
.cell {
  display: inline-flex;
  align-items: center;
  height: 16px;
  padding: 0 6px 0 3px;
  position: relative;
}
.kid .tree-ic {
  margin-right: 4px;
}
.cell.grey {
  background: #d9d9d9;
}
.cell.blue {
  background: #316ac5;
  color: #000;
}
.node {
  white-space: nowrap;
}

/* scrollbars */
.sb {
  width: 15px;
  flex: none;
  background: #f0f0f0;
  display: flex;
  flex-direction: column;
  height: 100%;
}
.sb-arrow {
  height: 17px;
  width: 15px;
  flex: none;
  fill: none;
  stroke: #555;
  stroke-width: 1.8;
}
.sb-track {
  flex: 1;
  min-height: 0;
}
.sb-thumb {
  background: #cdcdcd;
}
.nav-tree-top .sb {
  margin-right: 1px;
}
.nav-track {
  padding-top: 20px;
}
.nav-track .sb-thumb {
  height: 207px;
}
.list-track .sb-thumb {
  height: 229px;
}
.prop-track .sb-thumb {
  height: 297px;
}
.hsb {
  height: 16px;
  flex: none;
  display: flex;
  align-items: center;
  background: #f0f0f0;
}
.hsb-arrow {
  width: 17px;
  height: 12px;
  fill: none;
  stroke: #555;
  stroke-width: 1.8;
  flex: none;
}
.hsb-thumb {
  width: 102px;
  height: 15px;
  background: #cdcdcd;
  flex: none;
}
.hsb-arrow.right {
  margin-left: 3px;
}

/* work area */
.work {
  flex: 1;
  min-width: 0;
  display: flex;
  flex-direction: column;
}
.row3 {
  height: 28px;
  margin-top: 1px;
  flex: none;
}
.floor {
  width: 61px;
  height: 24px;
  background: #fff;
  display: flex;
  align-items: center;
  padding-left: 2px;
  justify-content: space-between;
  box-sizing: border-box;
  padding-right: 3px;
  margin-left: 2px;
}
.panes {
  flex: 1;
  min-height: 0;
  display: flex;
}

/* component list */
.list-pane {
  width: 181px;
  flex: none;
  margin-right: 5px;
  display: flex;
  flex-direction: column;
}
.search {
  height: 25px;
  margin-top: 4px;
  display: flex;
  align-items: center;
  flex: none;
}
.search-box {
  width: 156px;
  height: 24px;
  box-sizing: border-box;
  border: 1px solid #8e8e8e;
  background: #fff;
  color: #8a8a8a;
  line-height: 22px;
  font-size: 13px;
  padding-left: 2px;
}
.search-ic {
  width: 16px;
  height: 16px;
  margin-left: 5px;
}
.list-box {
  height: 563px;
  box-sizing: border-box;
  border: 2px solid #a8a8a8;
  border-width: 1px 1px 2px 1px;
  display: flex;
  background: #fff;
  flex: none;
}
.list-box .sb {
  margin-right: 1px;
}
.list-box .tree {
  padding: 1px 0 0 1px;
}
.list-root {
  padding-left: 4px;
}
.list-root .dots.h {
  left: 17px;
  width: 6px;
}
.list-root .tree-ic {
  margin-left: 6px;
  margin-right: 7px;
}
.list-kid {
  padding-left: 38px;
}
.list-kid .link {
  left: 29px;
}
.list-kid .dots.h {
  left: 30px;
  width: 8px;
}
.gear {
  width: 12px;
  height: 12px;
  margin-left: 1px;
  margin-right: 7px;
  flex: none;
}
.list-kid .cell {
  padding: 0 4px 0 3px;
  min-width: 44px;
}

/* property editor */
.prop-pane {
  width: 1008px;
  flex: none;
}
.tabs {
  height: 20px;
  margin-top: 1px;
  background: #fff;
  border-top: 1px solid #f0f0f0;
}
.tab {
  display: block;
  width: 60px;
  height: 20px;
  margin-left: 2px;
  text-align: center;
  line-height: 19px;
  font-size: 12px;
  background: #fff;
  border-right: 1px solid #c8c8c8;
  border-bottom: 1px solid #c8c8c8;
}
.prop-box {
  margin: 2px 0 0 4px;
  height: 570px;
  box-sizing: border-box;
  border: 1px solid #b8b8b8;
  display: flex;
  background: #fff;
}
.prop-table {
  flex: 1;
  min-width: 0;
  padding-left: 1px;
}
.prop-sb {
  border-left: 1px solid #bcbcbc;
}
.prow {
  display: flex;
  width: 214px;
  height: 19px;
  box-sizing: border-box;
  border-bottom: 1px solid #c4c4c4;
}
.phead {
  height: 24px;
}
.pidx {
  width: 21px;
  flex: none;
  background: #f0f0f0;
  border-right: 1px solid #c4c4c4;
  text-align: center;
  line-height: 18px;
  font-family: "Liberation Mono", monospace;
  font-size: 11px;
  letter-spacing: -0.6px;
}
.pname {
  width: 190px;
  flex: none;
  line-height: 18px;
  white-space: nowrap;
  border-right: 1px solid #c4c4c4;
  display: flex;
  align-items: center;
}
.phead .pname {
  justify-content: center;
  background: linear-gradient(#fcfcfc, #ececec);
  line-height: 23px;
}
.phead .pidx {
  background: linear-gradient(#fcfcfc, #ececec);
}
.pname.left {
  padding-left: 20px;
  box-sizing: border-box;
}
.cur .pidx {
  background: #fdd28a;
  color: #800000;
}
.pname.sel {
  background: #0078d7;
  color: #fff;
}
.pname.link {
  color: #0000f0;
}
.pname.mute {
  color: #8a8a8a;
}
.plus {
  display: block;
  width: 11px;
  height: 11px;
  border: 1px solid #a0a0a0;
  margin: 0 4px 0 -18px;
  flex: none;
  box-sizing: content-box;
  background:
    linear-gradient(#222, #222) center / 7px 1px no-repeat,
    linear-gradient(#222, #222) center / 1px 7px no-repeat;
}

/* status bar */
.status {
  height: 21px;
  flex: none;
  display: flex;
  padding-top: 1px;
  box-sizing: border-box;
  background: #fff;
  font-size: 12px;
}
.st {
  height: 19px;
  line-height: 18px;
  box-sizing: border-box;
  border: 1px solid #d8d8d8;
  background: #f4f4f4;
  margin-right: 2px;
  flex: none;
  white-space: nowrap;
  padding-left: 1px;
}
.s0 {
  width: 148px;
}
.s1 {
  width: 77px;
}
.s2 {
  width: 98px;
}
.s3 {
  width: 48px;
}
.s4 {
  width: 915px;
}
.s5 {
  width: 69px;
  margin-right: 0;
}

/* taskbar */
.taskbar {
  height: 40px;
  flex: none;
  background: #051016;
  display: flex;
  color: #e8e8e8;
}
.start {
  width: 48px;
  background: #000;
  display: flex;
  align-items: center;
  justify-content: center;
  flex: none;
}
.start svg {
  width: 16px;
  height: 16px;
}
.tsearch {
  width: 344px;
  flex: none;
  background: #333;
  color: #9a9a9a;
  display: flex;
  align-items: center;
  font-size: 14px;
}
.tsearch span {
  margin-left: 6px;
}
.cortana {
  width: 22px;
  height: 22px;
  margin-left: 9px;
}
.tmic {
  width: 14px;
  height: 20px;
  margin-left: auto;
  margin-right: 14px;
}
.tc {
  position: relative;
  flex: none;
  display: flex;
  align-items: center;
  justify-content: center;
  height: 40px;
  box-sizing: border-box;
}
.tc.run::after {
  content: "";
  position: absolute;
  left: 3px;
  right: 3px;
  bottom: 0;
  height: 2px;
  background: #8cc4f0;
}
.tc.active {
  background: #2c3d49;
}
.tc.active.run::after {
  left: 0;
  right: 0;
}
.tsep::before {
  content: "";
  width: 2px;
  height: 20px;
  border-left: 1px solid #555;
  border-right: 1px solid #555;
}
.tc-text {
  font-size: 12px;
  white-space: nowrap;
}
.tc-text.big {
  font-size: 15px;
}
.cpu {
  width: 68px;
  margin-left: 8px;
  font-size: 12px;
  line-height: 20px;
  text-align: center;
  display: block;
}
.clock {
  position: relative;
  z-index: 1;
  width: 64px;
  margin-right: -4px;
  flex: none;
  font-size: 12.5px;
  line-height: 20px;
  text-align: right;
  box-sizing: border-box;
}
.notif {
  position: relative;
  margin-left: auto;
  width: 70px;
  background: #000;
  display: block;
  flex: none;
}
.notif svg {
  position: absolute;
  left: 27px;
  top: 8px;
  width: 22px;
  height: 22px;
}
.notif b {
  position: absolute;
  left: 35px;
  top: 16px;
  width: 18px;
  height: 18px;
  border-radius: 9px;
  background: #333;
  border: 1px solid #555;
  box-sizing: border-box;
  text-align: center;
  line-height: 16px;
  color: #fff;
  font-size: 12px;
}

/* section editor window */
.dlg {
  position: absolute;
  left: 534px;
  top: 132px;
  width: 810px;
  height: 570px;
  box-sizing: border-box;
  border: 1px solid #3a3a3a;
  border-left-color: #5b7fa0;
  background: #b9d1e9;
  display: flex;
  flex-direction: column;
}
.dlg-title {
  height: 30px;
  flex: none;
  background: linear-gradient(#98b3d1, #c0d6ec);
  padding: 11px 0 0 7px;
  box-sizing: border-box;
  line-height: 16px;
  font-size: 12px;
}
.dlg-body {
  margin: 0 7px;
  width: 794px;
  box-sizing: border-box;
  background: #fff;
  padding: 4px 4px 4px 5px;
  flex: none;
}
.dlg-tb {
  height: 31px;
  display: flex;
  align-items: center;
  background: linear-gradient(#fdfdfd, #ededed);
  padding-left: 4px;
  margin-right: -1px;
}
.grip {
  width: 2px;
  height: 16px;
  flex: none;
  margin-right: 6px;
  background: repeating-linear-gradient(#a8a8a8 0 2px, transparent 2px 4px);
}
.dbtn {
  margin-right: 10px;
  white-space: nowrap;
}
.dbtn.sepafter {
  margin-right: 16px;
  position: relative;
}
.dbtn.sepafter::after {
  content: "";
  position: absolute;
  right: -9px;
  top: -1px;
  height: 18px;
  border-left: 1px solid #c4c4c4;
}
.dbtn.off {
  color: #9a9ab0;
}
.dlg-tb2 {
  height: 28px;
  background: #ededed;
  margin-right: -1px;
}
.dlg-tb2-in {
  display: flex;
  align-items: center;
  height: 26px;
  width: 198px;
  background: linear-gradient(#fbfbfb, #efefef);
  padding-left: 4px;
  box-sizing: border-box;
}
.dinfo {
  color: #8a8a8a;
}
.dcombo {
  width: 133px;
  height: 22px;
  box-sizing: border-box;
  border: 1px solid #707070;
  margin-left: 2px;
  color: #8a8a8a;
  padding: 0 5px 0 1px;
  display: flex;
  justify-content: space-between;
  align-items: center;
  font-size: 13px;
}
.dcombo .caret {
  border-top-color: #777;
}
.canvas {
  width: 785px;
  height: 442px;
  box-sizing: border-box;
  border: 2px solid #f00;
  background: #000;
}
.canvas svg {
  display: block;
}
.cad-num {
  font-family: "Liberation Serif", serif;
  font-size: 24px;
}
.cad-cn {
  font-family: "Noto Sans CJK SC", sans-serif;
  font-size: 22.5px;
  font-weight: 300;
}
.dlg-status {
  margin: 4px 8px 0 12px;
  height: 18px;
  flex: none;
  display: flex;
  background: #f4f4f4;
  border: 1px solid #e4e4e4;
  box-sizing: border-box;
  position: relative;
  font-size: 12px;
}
.ds1 {
  width: 144px;
  flex: none;
  line-height: 16px;
  padding-left: 3px;
  box-sizing: border-box;
  border-right: 1px solid #cfcfcf;
}
.ds2 {
  padding-left: 2px;
  line-height: 16px;
}
.sgrip {
  position: absolute;
  right: 1px;
  bottom: 1px;
  width: 12px;
  height: 12px;
}

/* floating IME bar and score ball */
.ime {
  position: absolute;
  left: 703px;
  top: 3px;
  width: 204px;
  height: 24px;
  box-sizing: border-box;
  border: 1px solid #bcd0e4;
  background: #fff;
  display: flex;
  align-items: center;
  padding-left: 30px;
  gap: 5px;
}
.ime-s {
  position: absolute;
  left: 0;
  top: 0;
  width: 25px;
  height: 25px;
  border-radius: 4px;
  background: #f0501e;
  color: #fff;
  font: 700 22px/25px "Liberation Sans", sans-serif;
  text-align: center;
  transform: rotate(-8deg);
}
.ime-cn {
  color: #2a7fd6;
  font-size: 15px;
  font-weight: 700;
  width: 16px;
}
.ime-ic {
  width: 17px;
  height: 17px;
  flex: none;
}
.ball {
  position: absolute;
  left: 966px;
  top: -28px;
  width: 48px;
  height: 48px;
  box-sizing: border-box;
  border-radius: 50%;
  border: 2px solid #a8b0a8;
  background: #48bf5a;
  color: #fff;
  font: 700 11px/14px "Liberation Sans", sans-serif;
  text-align: center;
}
.ball span {
  position: absolute;
  left: 0;
  right: 0;
  top: 27px;
}
</style>

<style>
html,
body {
  margin: 0;
  overflow: hidden;
}
</style>
